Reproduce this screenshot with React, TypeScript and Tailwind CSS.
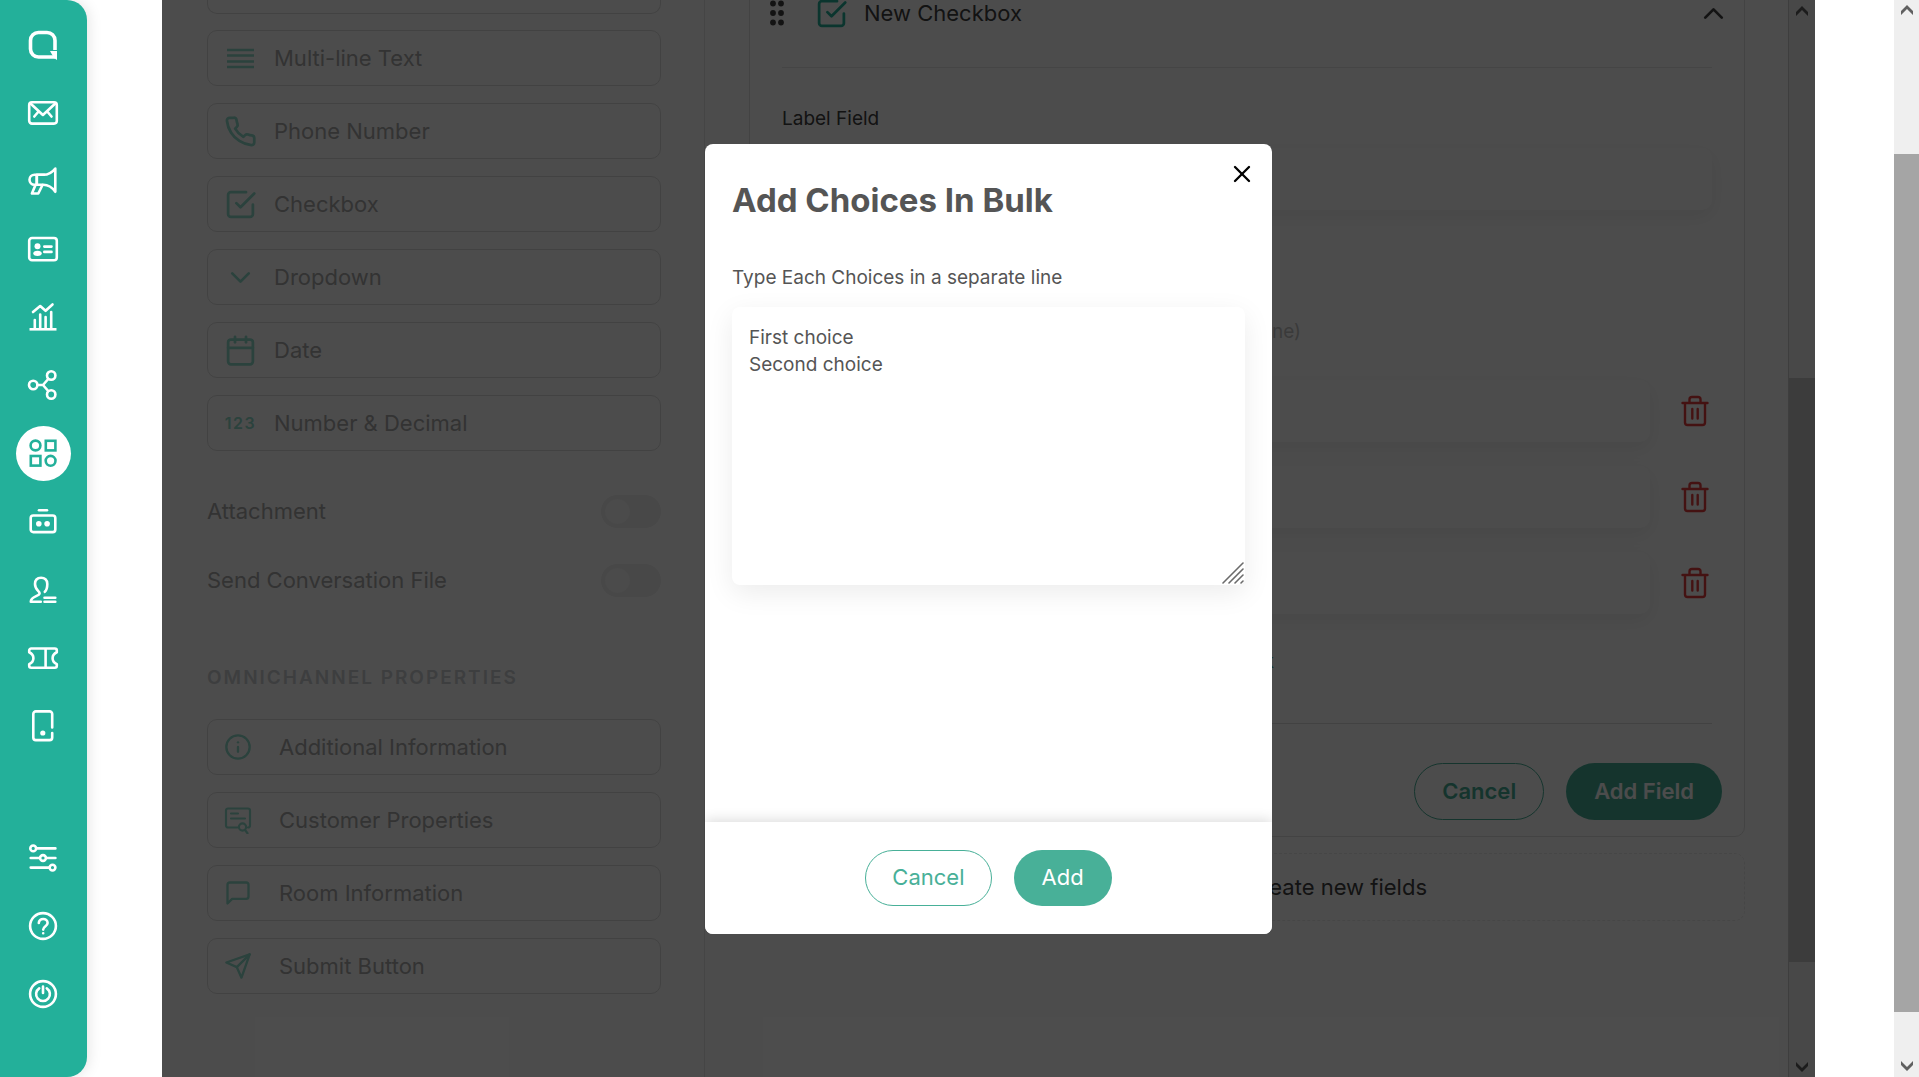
import type { ReactNode } from "react";
import {
	FiCalendar,
	FiCheckSquare,
	FiChevronDown,
	FiChevronUp,
	FiInfo,
	FiMessageSquare,
	FiPhone,
	FiSend,
	FiX,
} from "react-icons/fi";

function Glyph({ children }: { children: ReactNode }) {
	return (
		<svg
			viewBox="0 0 32 32"
			className="size-8 overflow-visible"
			fill="none"
			stroke="currentColor"
			strokeWidth="2.6"
			strokeLinecap="round"
			strokeLinejoin="round"
			aria-hidden="true"
		>
			{children}
		</svg>
	);
}

const mainNav = [
	{
		name: "Home",
		icon: (
			<Glyph>
				<path
					d="M28 21V11.500a8 8 0 0 0-8-8h-8.500a8 8 0 0 0-8 8V20a8 8 0 0 0 8 8H28"
					strokeWidth="3.6"
					strokeLinecap="butt"
				/>
				<path d="M23 22h7v9l-3-2z" fill="currentColor" stroke="none" />
			</Glyph>
		),
	},
	{
		name: "Inbox",
		icon: (
			<Glyph>
				<rect x="2.200" y="5.200" width="27.600" height="21.400" rx="2.800" />
				<path d="M3.500 6.500 15.900 18 28.300 6.500M7.300 19.500l3.400-4M24.500 19.500l-3.400-4" />
			</Glyph>
		),
	},
	{
		name: "Broadcast",
		icon: (
			<Glyph>
				<path d="M9.800 9.800H7.500a5 5 0 0 0 0 10h8.800c5 0 9 2.800 12 7V3.500c-3 4-7 6.300-12 6.300zv10" />
				<path d="M9.800 9.800H17M9.800 9.800v10M8.500 20 4.900 28.500h6.400L15.500 20" />
			</Glyph>
		),
	},
	{
		name: "Contacts",
		icon: (
			<Glyph>
				<rect x="2.200" y="5" width="27.600" height="22.200" rx="2.800" />
				<g fill="currentColor" stroke="none">
					<circle cx="10.500" cy="13.300" r="3" />
					<ellipse cx="10.500" cy="20.300" rx="4.200" ry="2.600" />
				</g>
				<path d="M17.300 13.600h7.200M17.300 18.900h7.200" />
			</Glyph>
		),
	},
	{
		name: "Analytics",
		icon: (
			<Glyph>
				<path d="M2.500 28.300h27" strokeLinecap="butt" />
				<path d="M7.800 19v8M13.200 13.500V27M18.600 16v11M24.200 11v16M6 11l7.200-6 5.400 4.800L25.500 3.500" />
			</Glyph>
		),
	},
	{
		name: "Integration",
		icon: (
			<Glyph>
				<circle cx="6.200" cy="16" r="4.200" />
				<circle cx="24.200" cy="6.500" r="4.200" />
				<circle cx="24.200" cy="25.500" r="4.200" />
				<path d="M10.500 16H16l5.200-6M16 16l5.200 6" />
			</Glyph>
		),
	},
	{
		name: "Apps",
		active: true,
		icon: (
			<Glyph>
				<g strokeLinejoin="miter">
					<circle cx="8.500" cy="8.500" r="4.900" />
					<rect x="18.800" y="3.800" width="9.600" height="9.600" />
					<rect x="3.800" y="19" width="9.600" height="9.600" />
					<circle cx="23.600" cy="23.800" r="4.900" />
				</g>
			</Glyph>
		),
	},
	{
		name: "Bot",
		icon: (
			<Glyph>
				<path d="M12 5.200h8" />
				<rect x="3.700" y="10.500" width="24.600" height="16.600" rx="2.600" />
				<g fill="currentColor" stroke="none">
					<circle cx="11.800" cy="18.800" r="2.800" />
					<circle cx="20.100" cy="18.800" r="2.800" />
				</g>
			</Glyph>
		),
	},
	{
		name: "Agents",
		icon: (
			<Glyph>
				<path d="M17.800 18.800c2-1.800 2.500-4.300 2.500-7.800 0-4.200-2.700-6.300-6.200-6.300S8 6.800 8 11c0 6 4.600 7 4.600 9.300 0 3.200-8.800 2.700-8.800 8.400h10M17.500 24.800h10.800M17.500 28.800h10.800" />
			</Glyph>
		),
	},
	{
		name: "Tickets",
		icon: (
			<Glyph>
				<path d="M4.200 7.500h23.600a2 2 0 0 1 2 2v1.800c-5.600 2.600-5.600 9.200 0 11.800v1.700a2 2 0 0 1-2 2H4.200a2 2 0 0 1-2-2v-1.700c5.600-2.600 5.600-9.200 0-11.800V9.500a2 2 0 0 1 2-2zM18.600 7.500v19" />
			</Glyph>
		),
	},
	{
		name: "Mobile",
		icon: (
			<Glyph>
				<path d="M25.200 18.500V5a2.600 2.600 0 0 0-2.600-2.600H8.900A2.600 2.600 0 0 0 6.300 5v23.500a2.600 2.600 0 0 0 2.600 2.600h13.700a2.600 2.600 0 0 0 2.600-2.600v-4.500" />
				<circle cx="15.800" cy="24" r="2.600" fill="currentColor" stroke="none" />
			</Glyph>
		),
	},
];

const bottomNav = [
	{
		name: "Settings",
		icon: (
			<Glyph>
				<path d="M9.800 6.400h18.600M3.700 16h8.600M19.600 16h8.800M3.700 25.600h18" />
				<circle cx="6.200" cy="6.400" r="2.900" />
				<circle cx="16" cy="16" r="2.900" />
				<circle cx="25.500" cy="25.600" r="2.900" />
			</Glyph>
		),
	},
	{
		name: "Help",
		icon: (
			<Glyph>
				<circle cx="16" cy="16" r="12.900" />
				<path d="M11.800 13c0-5.500 8.800-5.300 8.800 0 0 3.200-4.400 3.200-4.400 6.600M16.200 23.200v.1" />
			</Glyph>
		),
	},
	{
		name: "Log out",
		icon: (
			<Glyph>
				<circle cx="16" cy="16" r="12.900" />
				<path d="M12.200 10.300a6.900 6.900 0 1 0 7.600 0M16 8.500V15" />
			</Glyph>
		),
	},
];

const fieldTypes = [
	{
		name: "Multi-line Text",
		icon: (
			<svg viewBox="0 0 33 33" className="size-[33px]" stroke="currentColor" strokeWidth="2.4">
				<path d="M3 8h27M3 13.500h27M3 19.500h27M3 25h27" />
			</svg>
		),
	},
	{ name: "Phone Number", icon: <FiPhone size={33} /> },
	{ name: "Checkbox", icon: <FiCheckSquare size={33} /> },
	{ name: "Dropdown", icon: <FiChevronDown size={33} /> },
	{ name: "Date", icon: <FiCalendar size={33} /> },
	{
		name: "Number & Decimal",
		icon: <span className="text-base font-semibold tracking-widest">123</span>,
	},
];

const omniProperties = [
	{ name: "Additional Information", icon: <FiInfo size={28} /> },
	{
		name: "Customer Properties",
		icon: (
			<svg
				viewBox="0 0 28 28"
				className="size-7"
				fill="none"
				stroke="currentColor"
				strokeWidth="2.2"
				strokeLinecap="round"
				strokeLinejoin="round"
			>
				<path d="M13.500 21.500H4A2 2 0 0 1 2 19.500v-15a2 2 0 0 1 2-2h20a2 2 0 0 1 2 2v15a2 2 0 0 1-2 2M7 7.500h7M7 12.500h14" />
				<circle cx="18.500" cy="21" r="3.600" />
				<path d="m21 24 2.500 3.200" />
			</svg>
		),
	},
	{ name: "Room Information", icon: <FiMessageSquare size={28} /> },
	{ name: "Submit Button", icon: <FiSend size={28} /> },
];

function NavList({ items }: { items: { name: string; icon: ReactNode; active?: boolean }[] }) {
	return (
		<ul>
			{items.map((item) => (
				<li key={item.name} className="flex h-[68px] items-center justify-center">
					<a
						href="#"
						aria-label={item.name}
						className={
							item.active
								? "flex size-[55px] items-center justify-center rounded-full bg-white text-[#23b09a]"
								: "flex size-[55px] items-center justify-center text-white"
						}
					>
						{item.icon}
					</a>
				</li>
			))}
		</ul>
	);
}

function Toggle({ label }: { label: string }) {
	return (
		<label className="flex h-[33px] items-center justify-between text-[#aaa]">
			{label}
			<input type="checkbox" className="peer sr-only" />
			<span className="flex h-[33px] w-[60px] items-center rounded-full bg-[#f0f0f0] px-1">
				<span className="size-[25px] rounded-full bg-[#fafafa]" />
			</span>
		</label>
	);
}

function TrashIcon() {
	return (
		<svg
			viewBox="0 0 28 32"
			className="h-8 w-7"
			fill="none"
			stroke="currentColor"
			strokeWidth="2.4"
			strokeLinecap="round"
			strokeLinejoin="round"
			aria-hidden="true"
		>
			<path d="M1.500 8h25M4 8v19.500a2.500 2.500 0 0 0 2.500 2.500h15a2.500 2.500 0 0 0 2.500-2.500V8M8.500 8V4.500a2.500 2.500 0 0 1 2.500-2.500h6a2.500 2.500 0 0 1 2.500 2.500V8M11.300 14v9.500M16.700 14v9.500" />
		</svg>
	);
}

function Arrow({ down }: { down?: boolean }) {
	return (
		<svg viewBox="0 0 12 10" className="h-[10px] w-3 fill-[#606060]" aria-hidden="true">
			{down ? <path d="M0 0v4l6 6 6-6V0L6 6z" /> : <path d="M0 10V6l6-6 6 6v4L6 4z" />}
		</svg>
	);
}

function FieldList() {
	return (
		<section className="w-[543px] shrink-0 overflow-hidden border-r border-[#e8e8e8] pr-[43px] pl-[45px] text-[22px] text-[#aaa]">
			<div className="h-[14px] rounded-b-[10px] border border-t-0 border-[#dedede]" />
			<ul className="mt-4 flex flex-col gap-[17px]">
				{fieldTypes.map((field) => (
					<li key={field.name}>
						<button
							type="button"
							className="flex h-14 w-full items-center gap-[17px] rounded-[10px] border border-[#dedede] px-4"
						>
							<span className="flex w-[33px] justify-center text-[#8fdccb]">{field.icon}</span>
							{field.name}
						</button>
					</li>
				))}
			</ul>
			<div className="mt-11 flex flex-col gap-9">
				<Toggle label="Attachment" />
				<Toggle label="Send Conversation File" />
			</div>
			<h3 className="mt-[67px] text-[19px] leading-7 font-semibold tracking-[2px] text-[#cdcfd3]">
				OMNICHANNEL PROPERTIES
			</h3>
			<ul className="mt-[27px] flex flex-col gap-[17px]">
				{omniProperties.map((field) => (
					<li key={field.name}>
						<button
							type="button"
							className="flex h-14 w-full items-center gap-[27px] rounded-[10px] border border-[#dedede] px-4"
						>
							<span className="text-[#8fdccb]">{field.icon}</span>
							{field.name}
						</button>
					</li>
				))}
			</ul>
		</section>
	);
}

function FieldEditor() {
	return (
		<section className="min-w-0 flex-1 overflow-hidden pr-[43px] pl-11 text-[22px] text-[#404040]">
			<div className="-mt-6 rounded-[10px] border border-[#e2e2e2]">
				<div className="flex h-[72px] items-center pr-[14px] pl-5">
					<svg viewBox="0 0 14 26" className="mr-[31px] h-[26px] w-[14px]" fill="currentColor" aria-hidden="true">
						<circle cx="3" cy="3.500" r="2.900" />
						<circle cx="11" cy="3.500" r="2.900" />
						<circle cx="3" cy="13" r="2.900" />
						<circle cx="11" cy="13" r="2.900" />
						<circle cx="3" cy="22.500" r="2.900" />
						<circle cx="11" cy="22.500" r="2.900" />
					</svg>
					<FiCheckSquare size={33} className="text-[#26b39b]" />
					<h3 className="ml-4 flex-1">New Checkbox</h3>
					<button type="button" aria-label="Collapse">
						<FiChevronUp size={33} />
					</button>
				</div>
				<div className="mx-8 mt-[18px] border-t border-[#e8e8e8]">
					<label htmlFor="label-field" className="mt-[37px] block text-[19px] leading-7">
						Label Field
					</label>
					<input
						id="label-field"
						className="mt-[15px] block h-[62px] w-full rounded-[10px] bg-white px-4 shadow-[0_6px_20px_rgba(0,0,0,0.07)]"
					/>
					<div className="mt-[108px] flex w-[519px] justify-between text-[19px] leading-7">
						<span>Choices</span>
						<span className="text-[#c4c4c4]">(one choice per line)</span>
					</div>
					<ul className="mt-[34px] flex flex-col gap-6">
						{[1, 2, 3].map((n) => (
							<li key={n} className="flex items-center gap-[31px]">
								<input
									aria-label={`Choice ${n}`}
									className="h-[62px] flex-1 rounded-[10px] bg-white px-4 shadow-[0_6px_20px_rgba(0,0,0,0.07)]"
								/>
								<button type="button" aria-label={`Delete choice ${n}`} className="mr-[3px] text-[#e53e3e]">
									<TrashIcon />
								</button>
							</li>
						))}
					</ul>
					<div className="mt-[34px] w-[492px] pb-[47px] text-right text-[19px] leading-7">
						<button type="button" className="text-[#48b098]">
							Add choices in bulk
						</button>
					</div>
				</div>
				<div className="mx-8 border-t border-[#dcdcdc]" />
				<div className="flex justify-end gap-[22px] pt-[39px] pr-[22px] pb-4 font-semibold">
					<button type="button" className="h-[57px] rounded-full border border-[#48b098] px-[27px] text-[#48b098]">
						Cancel
					</button>
					<button type="button" className="h-[57px] rounded-full bg-[#48b098] px-7 text-white">
						Add Field
					</button>
				</div>
			</div>
			<p className="mt-4 flex h-[68px] items-center justify-center rounded-[10px] border border-dashed border-[#ececec]">
				Drag and drop to create new fields
			</p>
		</section>
	);
}

function BulkModal() {
	return (
		<div
			role="dialog"
			aria-labelledby="bulk-title"
			className="relative flex h-[790px] w-[567px] flex-col overflow-hidden rounded-lg bg-white text-[#555]"
		>
			<button type="button" aria-label="Close" className="absolute top-4 right-4 text-black">
				<FiX size={28} />
			</button>
			<div className="flex-1 px-[27px] pt-9">
				<h2 id="bulk-title" className="text-[33px] leading-10 font-bold">
					Add Choices In Bulk
				</h2>
				<label htmlFor="choices" className="mt-11 block text-[19px] leading-7">
					Type Each Choices in a separate line
				</label>
				<div className="relative mt-[15px]">
					<textarea
						id="choices"
						defaultValue={"First choice\nSecond choice"}
						className="block h-[278px] w-full resize-none rounded-lg bg-white px-[17px] py-[17px] text-[19px] leading-[27px] shadow-[0_8px_28px_rgba(0,0,0,0.08)] outline-none"
					/>
					<svg
						viewBox="0 0 22 22"
						className="absolute right-px bottom-px size-[22px]"
						stroke="#6b6b6b"
						strokeWidth="1.600"
						strokeLinecap="round"
						aria-hidden="true"
					>
						<path d="M1 21 21 1M7 21 21 7M13 21l8-8M19 21l2-2" />
					</svg>
				</div>
			</div>
			<div className="flex h-28 items-center justify-center gap-[22px] bg-white text-[22px] shadow-[0_-2px_12px_rgba(0,0,0,0.14)]">
				<button type="button" className="h-14 rounded-full border border-[#48b098] px-[26px] text-[#48b098]">
					Cancel
				</button>
				<button type="button" className="h-14 rounded-full bg-[#48b098] px-7 text-white">
					Add
				</button>
			</div>
		</div>
	);
}

export default function App() {
	return (
		<div className="flex h-screen overflow-hidden bg-white font-['Inter',sans-serif]">
			<nav className="flex w-[87px] shrink-0 flex-col justify-between rounded-r-[20px] bg-[#23b09a] pt-[11px] pr-px pb-[49px] shadow-[2px_0_14px_rgba(0,0,0,0.1)]">
				<NavList items={mainNav} />
				<NavList items={bottomNav} />
			</nav>

			<main className="relative mr-[79px] ml-[75px] flex min-w-0 flex-1">
				<FieldList />
				<FieldEditor />
				<div className="flex w-[27px] flex-col items-center border-l border-[#d0d0d0] bg-[#f0f0f0] pt-[6px] pb-[5px]">
					<Arrow />
					<div className="mt-[362px] h-[584px] w-full bg-[#c8c8c8]" />
					<div className="flex-1" />
					<Arrow down />
				</div>
				<div className="absolute inset-0 flex items-center justify-center bg-black/70">
					<BulkModal />
				</div>
			</main>

			<div className="flex w-[25px] shrink-0 flex-col items-center bg-[#efefef] pt-[5px] pb-[6px]">
				<Arrow />
				<div className="mt-[139px] h-[858px] w-full bg-[#a5a5a5]" />
				<div className="flex-1" />
				<Arrow down />
			</div>
		</div>
	);
}
